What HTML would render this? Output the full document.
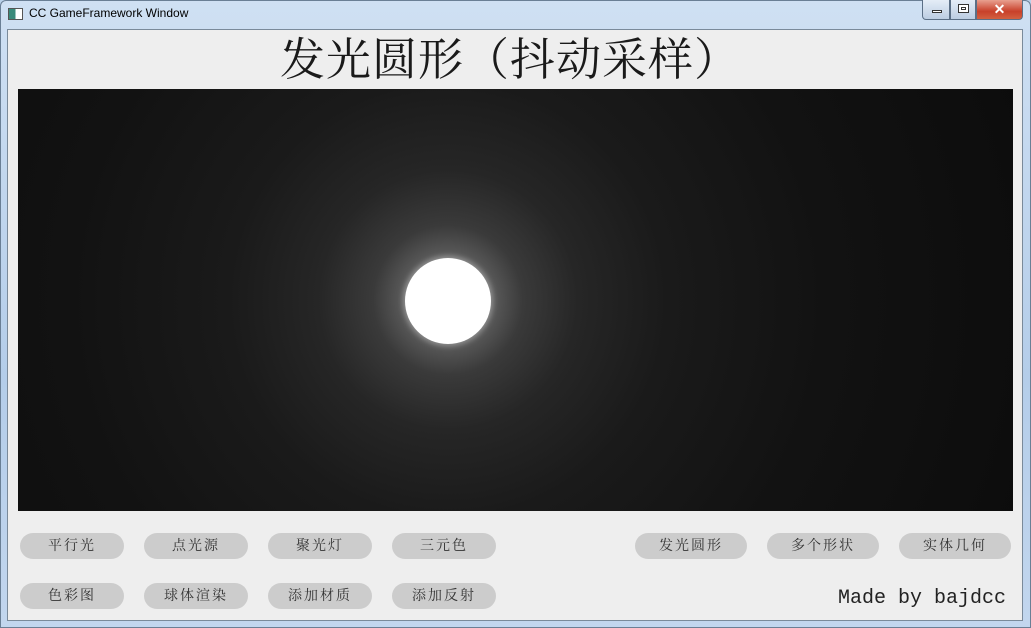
<!DOCTYPE html>
<html><head><meta charset="utf-8"><style>
*{margin:0;padding:0;box-sizing:border-box}
body{width:1031px;height:628px;overflow:hidden;background:#b9d1ea;position:relative;font-family:"Liberation Sans","Noto Sans CJK SC",sans-serif}
.frame{position:absolute;left:0;top:0;width:1031px;height:628px;background:linear-gradient(#cfe0f3,#b4cde9 60%,#c2d6ee);border:1px solid #6a7f95;border-radius:6px 6px 0 0}
.title{position:absolute;left:29px;top:6px;font-size:12px;color:#000}
.icon{position:absolute;left:8px;top:8px;width:15px;height:12px;border:1px solid #555;background:linear-gradient(90deg,#3a8a7a 50%,#fff 50%)}
.client{position:absolute;left:7px;top:29px;width:1016px;height:592px;background:#eeeeee;border:1px solid #7a8a9a}
.h1{position:absolute;left:0;width:1020px;top:30px;text-align:center;font-family:"Liberation Serif","Noto Serif CJK SC",serif;font-size:45px;color:#1a1a1a;letter-spacing:1px;line-height:60px}
.canvas{position:absolute;left:18px;top:89px;width:995px;height:422px;background:radial-gradient(circle at 430px 211px,#8a8a8a 0,#5a5a5a 45px,#3a3a3a 75px,#262626 130px,#1a1a1a 220px,#121212 380px,#0c0c0c 620px)}
.sun{position:absolute;width:86px;height:86px;border-radius:50%;background:#fff;box-shadow:0 0 6px 2px rgba(255,255,255,.35)}
.b{position:absolute;height:26px;background:#cccccc;border-radius:13px;text-align:center;line-height:28px;font-size:14px;color:#333;font-family:"Liberation Serif","Noto Serif CJK SC",serif;letter-spacing:2px}
.made{position:absolute;left:838px;top:587px;font-family:"Liberation Mono",monospace;font-size:20px;color:#222}
.wb{position:absolute;top:0;height:20px;border:1px solid #5b6f86;border-top:none}
</style></head><body>
<div class="frame"></div>
<div class="icon"></div>
<div class="title">CC GameFramework Window</div>
<div class="wb" style="left:922px;width:28px;background:linear-gradient(#e4edf7,#bccde2);border-radius:0 0 0 4px"><div style="position:absolute;left:9px;top:10px;width:10px;height:3px;border:1px solid #333;background:#fff"></div></div>
<div class="wb" style="left:950px;width:26px;background:linear-gradient(#e4edf7,#bccde2)"><div style="position:absolute;left:7px;top:4px;width:11px;height:9px;border:1px solid #333;background:#fff"><div style="margin:2px;height:3px;border:1px solid #333"></div></div></div>
<div class="wb" style="left:976px;width:47px;background:linear-gradient(#e8a090,#c8402a 60%,#d26040);border-radius:0 0 4px 0;color:#fff;text-align:center;font-weight:bold;font-size:14px;line-height:18px">✕</div>
<div class="client"></div>
<div class="h1">发光圆形（抖动采样）</div>
<div class="canvas"><div class="sun" style="left:387px;top:169px"></div></div>
<div class="b" style="left:20px;top:533px;width:104px">平行光</div>
<div class="b" style="left:144px;top:533px;width:104px">点光源</div>
<div class="b" style="left:268px;top:533px;width:104px">聚光灯</div>
<div class="b" style="left:392px;top:533px;width:104px">三元色</div>
<div class="b" style="left:635px;top:533px;width:112px">发光圆形</div>
<div class="b" style="left:767px;top:533px;width:112px">多个形状</div>
<div class="b" style="left:899px;top:533px;width:112px">实体几何</div>
<div class="b" style="left:20px;top:583px;width:104px">色彩图</div>
<div class="b" style="left:144px;top:583px;width:104px">球体渲染</div>
<div class="b" style="left:268px;top:583px;width:104px">添加材质</div>
<div class="b" style="left:392px;top:583px;width:104px">添加反射</div>
<div class="made">Made by bajdcc</div>
</body></html>
